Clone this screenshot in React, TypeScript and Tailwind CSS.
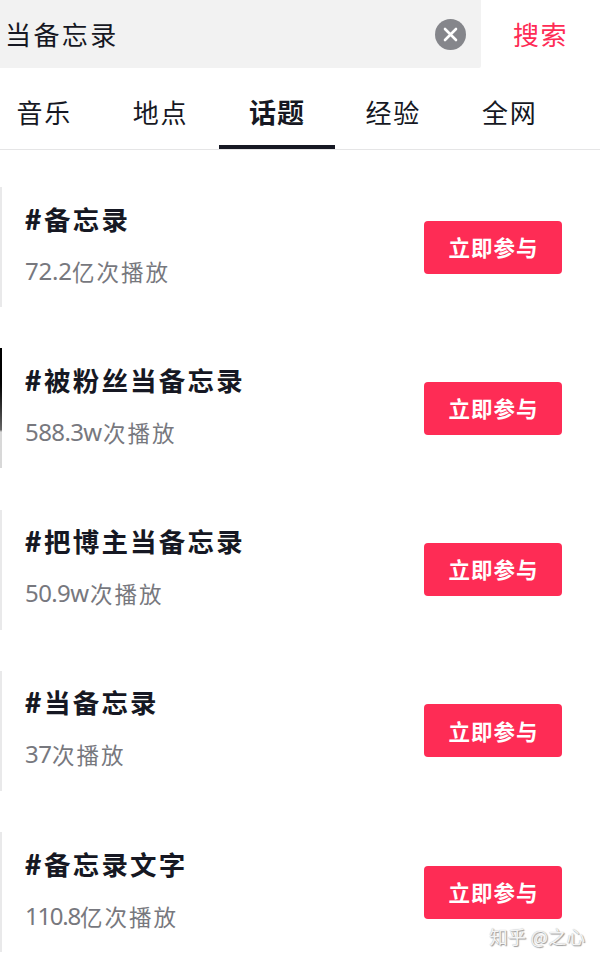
type Topic = {
  title: string;
  count: string;
  unit: string;
  spacing: string;
  thumb: string;
};

const topics: Topic[] = [
  { title: "备忘录", count: "72.2", unit: "亿次播放", spacing: "w-[47px] tracking-[-0.2px]", thumb: "bg-[#e9e9ea]" },
  {
    title: "被粉丝当备忘录",
    count: "588.3w",
    unit: "次播放",
    spacing: "w-[78px] tracking-[-0.6px]",
    thumb: "bg-linear-to-b from-black from-20% via-[#666] via-68% to-[#d8d8d8] to-70%",
  },
  { title: "把博主当备忘录", count: "50.9w", unit: "次播放", spacing: "w-[65px] tracking-[-0.6px]", thumb: "bg-[#e9e9ea]" },
  { title: "当备忘录", count: "37", unit: "次播放", spacing: "w-[27px] tracking-[-0.6px]", thumb: "bg-[#e9e9ea]" },
  { title: "备忘录文字", count: "110.8", unit: "亿次播放", spacing: "w-[55px] tracking-[-1.3px]", thumb: "bg-[#e9e9ea]" },
];

const tabs = ["音乐", "地点", "话题", "经验", "全网"];

function SearchBar() {
  return (
    <header className="flex h-[68px] shrink-0">
      <div className="flex w-[481px] items-center justify-between rounded-br-[2px] bg-[#f2f2f2] pl-[5px] pr-[15px]">
        <span className="text-[26px] leading-[40px] tracking-[2.4px]">当备忘录</span>
        <svg className="size-[31px]" viewBox="0 0 31 31" fill="none">
          <circle cx="15.5" cy="15.5" r="15.5" fill="#85868b" />
          <path d="M10 10L21 21M21 10L10 21" stroke="#fff" strokeWidth="2.6" strokeLinecap="round" />
        </svg>
      </div>
      <button className="flex flex-1 items-center justify-center pb-[2px] text-[26px] tracking-[1.5px] text-[#fe2c55]">
        搜索
      </button>
    </header>
  );
}

function Tabs() {
  return (
    <nav className="-ml-[14px] flex h-[82px] shrink-0 border-b border-[#e5e5e6]">
      {tabs.map((tab) => (
        <button
          key={tab}
          className={
            tab === "话题"
              ? "-mb-px flex h-[81px] w-[116.4px] shrink-0 items-center justify-center border-b-4 border-[#161823] pt-[12px] text-[27px] font-bold tracking-[1px]"
              : "flex h-[81px] w-[116.4px] shrink-0 items-center justify-center pt-[6px] text-[26px] tracking-[1.8px]"
          }
        >
          {tab}
        </button>
      ))}
    </nav>
  );
}

function TopicRow({ topic }: { topic: Topic }) {
  return (
    <li className="flex h-[120px] shrink-0 items-center">
      <div className={`h-full w-[1.5px] shrink-0 ${topic.thumb}`} />
      <div className="ml-[23.5px] flex flex-1 flex-col gap-[17px] pb-[10px] whitespace-nowrap">
        <h2 className="flex text-[26.5px] leading-[40px] font-bold tracking-[2.2px]">
          <span className="w-[19px] font-['Lato','Noto_Sans_CJK_SC',sans-serif] text-[28px] font-black tracking-normal">
            #
          </span>
          {topic.title}
        </h2>
        <p className="flex items-center text-[22.5px] leading-[30px] tracking-[2px] text-[#77787e]">
          <span className={`${topic.spacing} font-['Noto_Sans','Noto_Sans_CJK_SC',sans-serif] text-[24px]`}>
            {topic.count}
          </span>
          {topic.unit}
        </p>
      </div>
      <button className="mr-[38px] h-[53px] w-[138px] rounded-[4px] bg-[#fe2c55] pl-[1px] text-[21.5px] font-bold tracking-[1px] text-white">
        立即参与
      </button>
    </li>
  );
}

export default function App() {
  return (
    <div className="relative flex h-[961px] w-[600px] flex-col overflow-hidden bg-white font-['Noto_Sans_CJK_SC',sans-serif] text-[#161823]">
      <SearchBar />
      <Tabs />
      <ul className="flex flex-col gap-[41.3px] pt-[37px]">
        {topics.map((topic) => (
          <TopicRow key={topic.title} topic={topic} />
        ))}
      </ul>
      <div className="absolute right-[15px] bottom-[12px] text-[18.5px] leading-[26px] text-[#f4f4f4] [text-shadow:1px_1px_1px_#999,0_0_1px_#aaa]">
        知乎 @之心
      </div>
    </div>
  );
}
